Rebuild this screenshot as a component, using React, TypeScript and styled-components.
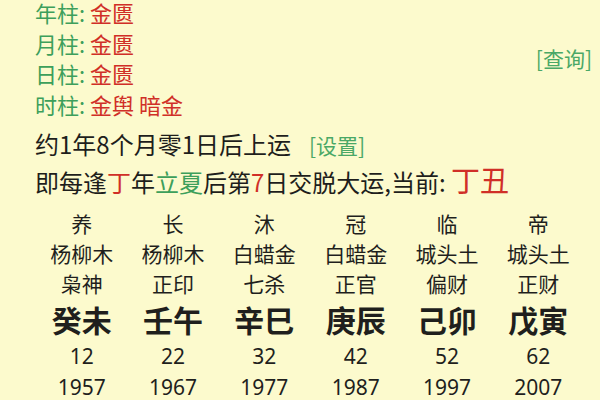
import React from 'react';
import styled, { createGlobalStyle } from 'styled-components';

const GlobalStyle = createGlobalStyle`
  html, body {
    margin: 0;
    padding: 0;
    background: #fcfacd;
    font-family: "Noto Sans CJK SC", "Noto Sans", sans-serif;
    color: #1e1e1c;
    overflow: hidden;
  }
`;

const Page = styled.div`
  width: 600px;
  height: 400px;
  overflow: hidden;
  background: #fcfacd;
`;

const Header = styled.div`
  display: flex;
  align-items: center;
  justify-content: space-between;
  padding: 0 8px 0 35px;
`;

const Pillars = styled.div`
  display: flex;
  flex-direction: column;
  gap: 6.5px;
`;

const PillarLine = styled.div`
  font-size: 22px;
  line-height: 24px;
  white-space: nowrap;
`;

const Label = styled.span`
  color: #3d9f5b;
`;

const Red = styled.span<{ $big?: boolean }>`
  color: #d02f27;
  font-size: ${(p) => (p.$big ? '29px' : 'inherit')};
`;

const Green = styled.span`
  color: #3d9f5b;
`;

const LinkText = styled.span`
  color: #4aa866;
  font-size: 21px;
`;

const Info = styled.div`
  margin-top: 11px;
  padding-left: 35px;
`;

const InfoLine = styled.div`
  display: flex;
  align-items: baseline;
  gap: 18px;
  font-size: 24px;
  line-height: 34px;
  white-space: nowrap;
`;

const Table = styled.div`
  display: grid;
  grid-template-columns: repeat(6, 1fr);
  width: 548px;
  margin: 9px 0 0 36px;
`;

const Column = styled.div`
  display: flex;
  flex-direction: column;
  align-items: center;
  color: #1f1f1d;
`;

const Cell = styled.div<{ $h: number; $size: number; $bold?: boolean; $num?: boolean }>`
  height: ${(p) => p.$h}px;
  line-height: ${(p) => p.$h}px;
  font-size: ${(p) => p.$size}px;
  font-weight: ${(p) => (p.$bold ? 700 : 400)};
  font-family: ${(p) => (p.$num ? '"Noto Sans", "Noto Sans CJK SC", sans-serif' : 'inherit')};
  white-space: nowrap;
`;

const pillars = [
  { label: '年柱', value: '金匮' },
  { label: '月柱', value: '金匮' },
  { label: '日柱', value: '金匮' },
  { label: '时柱', value: '金舆 暗金' },
];

const cycles = [
  { stage: '养', nayin: '杨柳木', god: '枭神', gz: '癸未', age: 12, year: 1957 },
  { stage: '长', nayin: '杨柳木', god: '正印', gz: '壬午', age: 22, year: 1967 },
  { stage: '沐', nayin: '白蜡金', god: '七杀', gz: '辛巳', age: 32, year: 1977 },
  { stage: '冠', nayin: '白蜡金', god: '正官', gz: '庚辰', age: 42, year: 1987 },
  { stage: '临', nayin: '城头土', god: '偏财', gz: '己卯', age: 52, year: 1997 },
  { stage: '帝', nayin: '城头土', god: '正财', gz: '戊寅', age: 62, year: 2007 },
];

const App: React.FC = () => {
  return (
    <Page>
      <GlobalStyle />
      <Header>
        <Pillars>
          {pillars.map((p) => (
            <PillarLine key={p.label}>
              <Label>{p.label}: </Label>
              <Red>{p.value}</Red>
            </PillarLine>
          ))}
        </Pillars>
        <LinkText>[查询]</LinkText>
      </Header>
      <Info>
        <InfoLine>
          <span>约1年8个月零1日后上运</span>
          <LinkText>[设置]</LinkText>
        </InfoLine>
        <InfoLine>
          <span>
            即每逢<Red>丁</Red>年<Green>立夏</Green>后第<Red>7</Red>日交脱大运,当前: <Red $big>丁丑</Red>
          </span>
        </InfoLine>
      </Info>
      <Table>
        {cycles.map((c) => (
          <Column key={c.year}>
            <Cell $h={30} $size={21}>{c.stage}</Cell>
            <Cell $h={30} $size={21}>{c.nayin}</Cell>
            <Cell $h={30} $size={21}>{c.god}</Cell>
            <Cell $h={42} $size={30} $bold>{c.gz}</Cell>
            <Cell $h={32} $size={21} $num>{c.age}</Cell>
            <Cell $h={30} $size={21} $num>{c.year}</Cell>
          </Column>
        ))}
      </Table>
    </Page>
  );
};

export default App;
